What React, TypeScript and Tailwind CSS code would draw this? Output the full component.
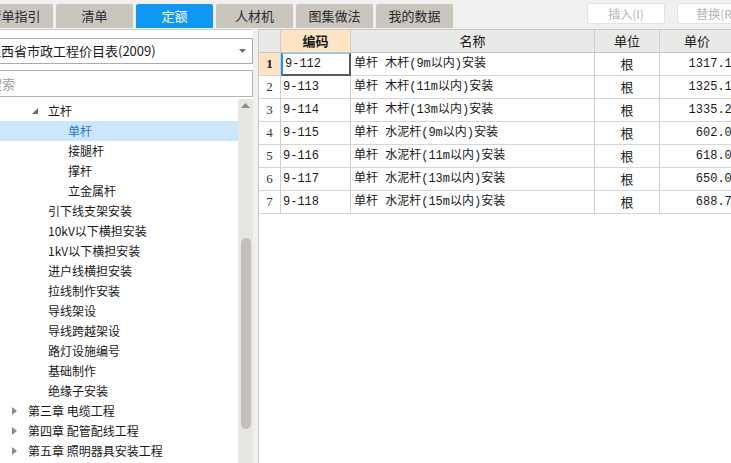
import React from 'react'

const tabs = ['清单指引', '清单', '定额', '人材机', '图集做法', '我的数据']

type Node = { text: string; level: 0 | 1 | 2; state?: 'open' | 'closed'; selected?: boolean }

const tree: Node[] = [
  { text: '立杆', level: 1, state: 'open' },
  { text: '单杆', level: 2, selected: true },
  { text: '接腿杆', level: 2 },
  { text: '撑杆', level: 2 },
  { text: '立金属杆', level: 2 },
  { text: '引下线支架安装', level: 1 },
  { text: '10kV以下横担安装', level: 1 },
  { text: '1kV以下横担安装', level: 1 },
  { text: '进户线横担安装', level: 1 },
  { text: '拉线制作安装', level: 1 },
  { text: '导线架设', level: 1 },
  { text: '导线跨越架设', level: 1 },
  { text: '路灯设施编号', level: 1 },
  { text: '基础制作', level: 1 },
  { text: '绝缘子安装', level: 1 },
  { text: '第三章 电缆工程', level: 0, state: 'closed' },
  { text: '第四章 配管配线工程', level: 0, state: 'closed' },
  { text: '第五章 照明器具安装工程', level: 0, state: 'closed' },
]

const indent = {
  0: 'pl-[6px]',
  1: 'pl-[27px]',
  2: 'pl-[47px]',
}

const rows = [
  ['9-112', '单杆 木杆(9m以内)安装', '根', '1317.17'],
  ['9-113', '单杆 木杆(11m以内)安装', '根', '1325.17'],
  ['9-114', '单杆 木杆(13m以内)安装', '根', '1335.27'],
  ['9-115', '单杆 水泥杆(9m以内)安装', '根', '602.06'],
  ['9-116', '单杆 水泥杆(11m以内)安装', '根', '618.06'],
  ['9-117', '单杆 水泥杆(13m以内)安装', '根', '650.06'],
  ['9-118', '单杆 水泥杆(15m以内)安装', '根', '688.75'],
]

const sans = 'font-["Noto_Sans_CJK_SC","Noto_Sans",sans-serif]'
const mono = 'font-["Liberation_Mono","Noto_Sans_CJK_SC",monospace]'

function Caret({ state }: { state?: 'open' | 'closed' }) {
  if (state === 'open')
    return (
      <svg width="6" height="6" viewBox="0 0 6 6">
        <path d="M6 0 L6 6 L0 6 Z" fill="#6b6b6b" />
      </svg>
    )
  if (state === 'closed')
    return (
      <svg width="5" height="8" viewBox="0 0 5 8">
        <path d="M0 0 L5 4 L0 8 Z" fill="#8a8a8a" />
      </svg>
    )
  return null
}

const App = () => {
  return (
    <div className={`flex h-[463px] w-[731px] flex-col overflow-hidden bg-[#f0f0f0] text-[#1a1a1a] ${sans}`}>
      {/* tab strip */}
      <div className="flex h-[29px] shrink-0 items-start">
        <div className="ml-[-24px] mt-[4px] flex gap-[3px]">
          {tabs.map((t) => (
            <div
              key={t}
              className={`flex h-[24px] w-[77px] items-center justify-center rounded-t-[2px] text-[13px] ${
                t === '定额' ? 'bg-[#0e98f5] text-white' : 'bg-[#cac6be] text-[#2a2a2a]'
              }`}
            >
              {t}
            </div>
          ))}
        </div>
        <div className="ml-auto mt-[3px] flex gap-[12px] mr-[-24px]">
          <button className="h-[21px] w-[78px] rounded-[2px] border border-[#e2e2e2] bg-white text-[12px] text-[#b4b4b4]">
            插入(I)
          </button>
          <button className="h-[21px] w-[78px] rounded-[2px] border border-[#e2e2e2] bg-white text-[12px] text-[#b4b4b4]">
            替换(R)
          </button>
        </div>
      </div>

      <div className="flex min-h-0 flex-1">
        {/* left panel */}
        <div className="flex w-[253px] shrink-0 flex-col overflow-hidden border-t border-[#c9c9c9] bg-white">
          <div className="ml-[-17px] mt-[8px] flex h-[26px] items-center border border-[#ababab] bg-white pl-[4px] pr-[6px] text-[13px]">
            <span className="flex-1 whitespace-nowrap">江西省市政工程价目表(2009)</span>
            <svg width="7" height="4" viewBox="0 0 7 4">
              <path d="M0 0 L7 0 L3.5 4 Z" fill="#707070" />
            </svg>
          </div>
          <div className="ml-[-17px] mt-[6px] flex h-[27px] items-center border border-[#b4b4b4] bg-white pl-[5px] text-[13px] text-[#a0a0a0]">
            搜索
          </div>
          <div className="mt-[2px] flex min-h-0 flex-1">
            <div className="flex-1 pt-[2px]">
              {tree.map((n) => (
                <div
                  key={n.text}
                  className={`flex h-[20px] items-center text-[12px] ${indent[n.level]} ${
                    n.selected ? 'bg-[#cce6fc] text-[#1a78d8]' : ''
                  }`}
                >
                  <span className="flex w-[16px] justify-center">
                    <Caret state={n.state} />
                  </span>
                  <span className={`whitespace-nowrap ${n.level === 0 ? 'ml-[6px]' : 'ml-[5px]'}`}>{n.text}</span>
                </div>
              ))}
            </div>
            <div className="flex w-[15px] shrink-0 flex-col items-center bg-[#e8e6e2]">
              <svg className="mt-[4px]" width="9" height="5" viewBox="0 0 9 5">
                <path d="M0 5 L4.5 0 L9 5 Z" fill="#8c8c8c" />
              </svg>
              <div className="mt-[130px] h-[191px] w-[10px] rounded-full bg-[#c3c0b9]" />
            </div>
          </div>
        </div>

        {/* right table */}
        <div className="ml-[5px] min-w-0 flex-1 overflow-hidden border-l border-t border-[#c8c8c8] bg-white">
          <div className="w-[520px]">
            <div className="flex h-[23px] border-b border-[#c8c8c8] bg-[#e9e9e7] text-[13px]">
              <div className="w-[22px] border-r border-[#cfcfcf]" />
              <div className="flex w-[70px] items-center justify-center border-r border-[#cfcfcf] bg-[#fde4c4] font-bold">
                编码
              </div>
              <div className="flex w-[244px] items-center justify-center border-r border-[#cfcfcf]">名称</div>
              <div className="flex w-[65px] items-center justify-center border-r border-[#cfcfcf]">单位</div>
              <div className="flex w-[74px] items-center justify-center">单价</div>
            </div>
            {rows.map((r, i) => (
              <div key={r[0]} className="flex h-[23px] border-b border-[#d6d6d6] text-[12px]">
                <div
                  className={`flex w-[22px] items-center justify-center border-r border-[#cfcfcf] font-["Liberation_Serif",serif] text-[13px] ${
                    i === 0 ? 'bg-[#fde4c4] font-bold' : 'text-[#333]'
                  }`}
                >
                  {i + 1}
                </div>
                <div
                  className={`flex w-[70px] items-center pl-[2px] ${mono} ${
                    i === 0
                      ? 'border-b-2 border-l-2 border-r-2 border-t border-b-[#5a5a5a] border-l-[#1e8fff] border-r-[#5a5a5a] border-t-[#7cc0ff] mb-[-1px]'
                      : 'border-r border-[#cfcfcf]'
                  }`}
                >
                  {r[0]}
                </div>
                <div className={`flex w-[244px] items-center whitespace-nowrap border-r border-[#cfcfcf] pl-[3px] ${mono}`}>
                  {r[1]}
                </div>
                <div className="flex w-[65px] items-center justify-center border-r border-[#cfcfcf] text-[13px]">
                  {r[2]}
                </div>
                <div className={`flex w-[80px] items-center justify-end pr-[1px] ${mono}`}>{r[3]}</div>
              </div>
            ))}
          </div>
        </div>
      </div>
    </div>
  )
}

export default App
